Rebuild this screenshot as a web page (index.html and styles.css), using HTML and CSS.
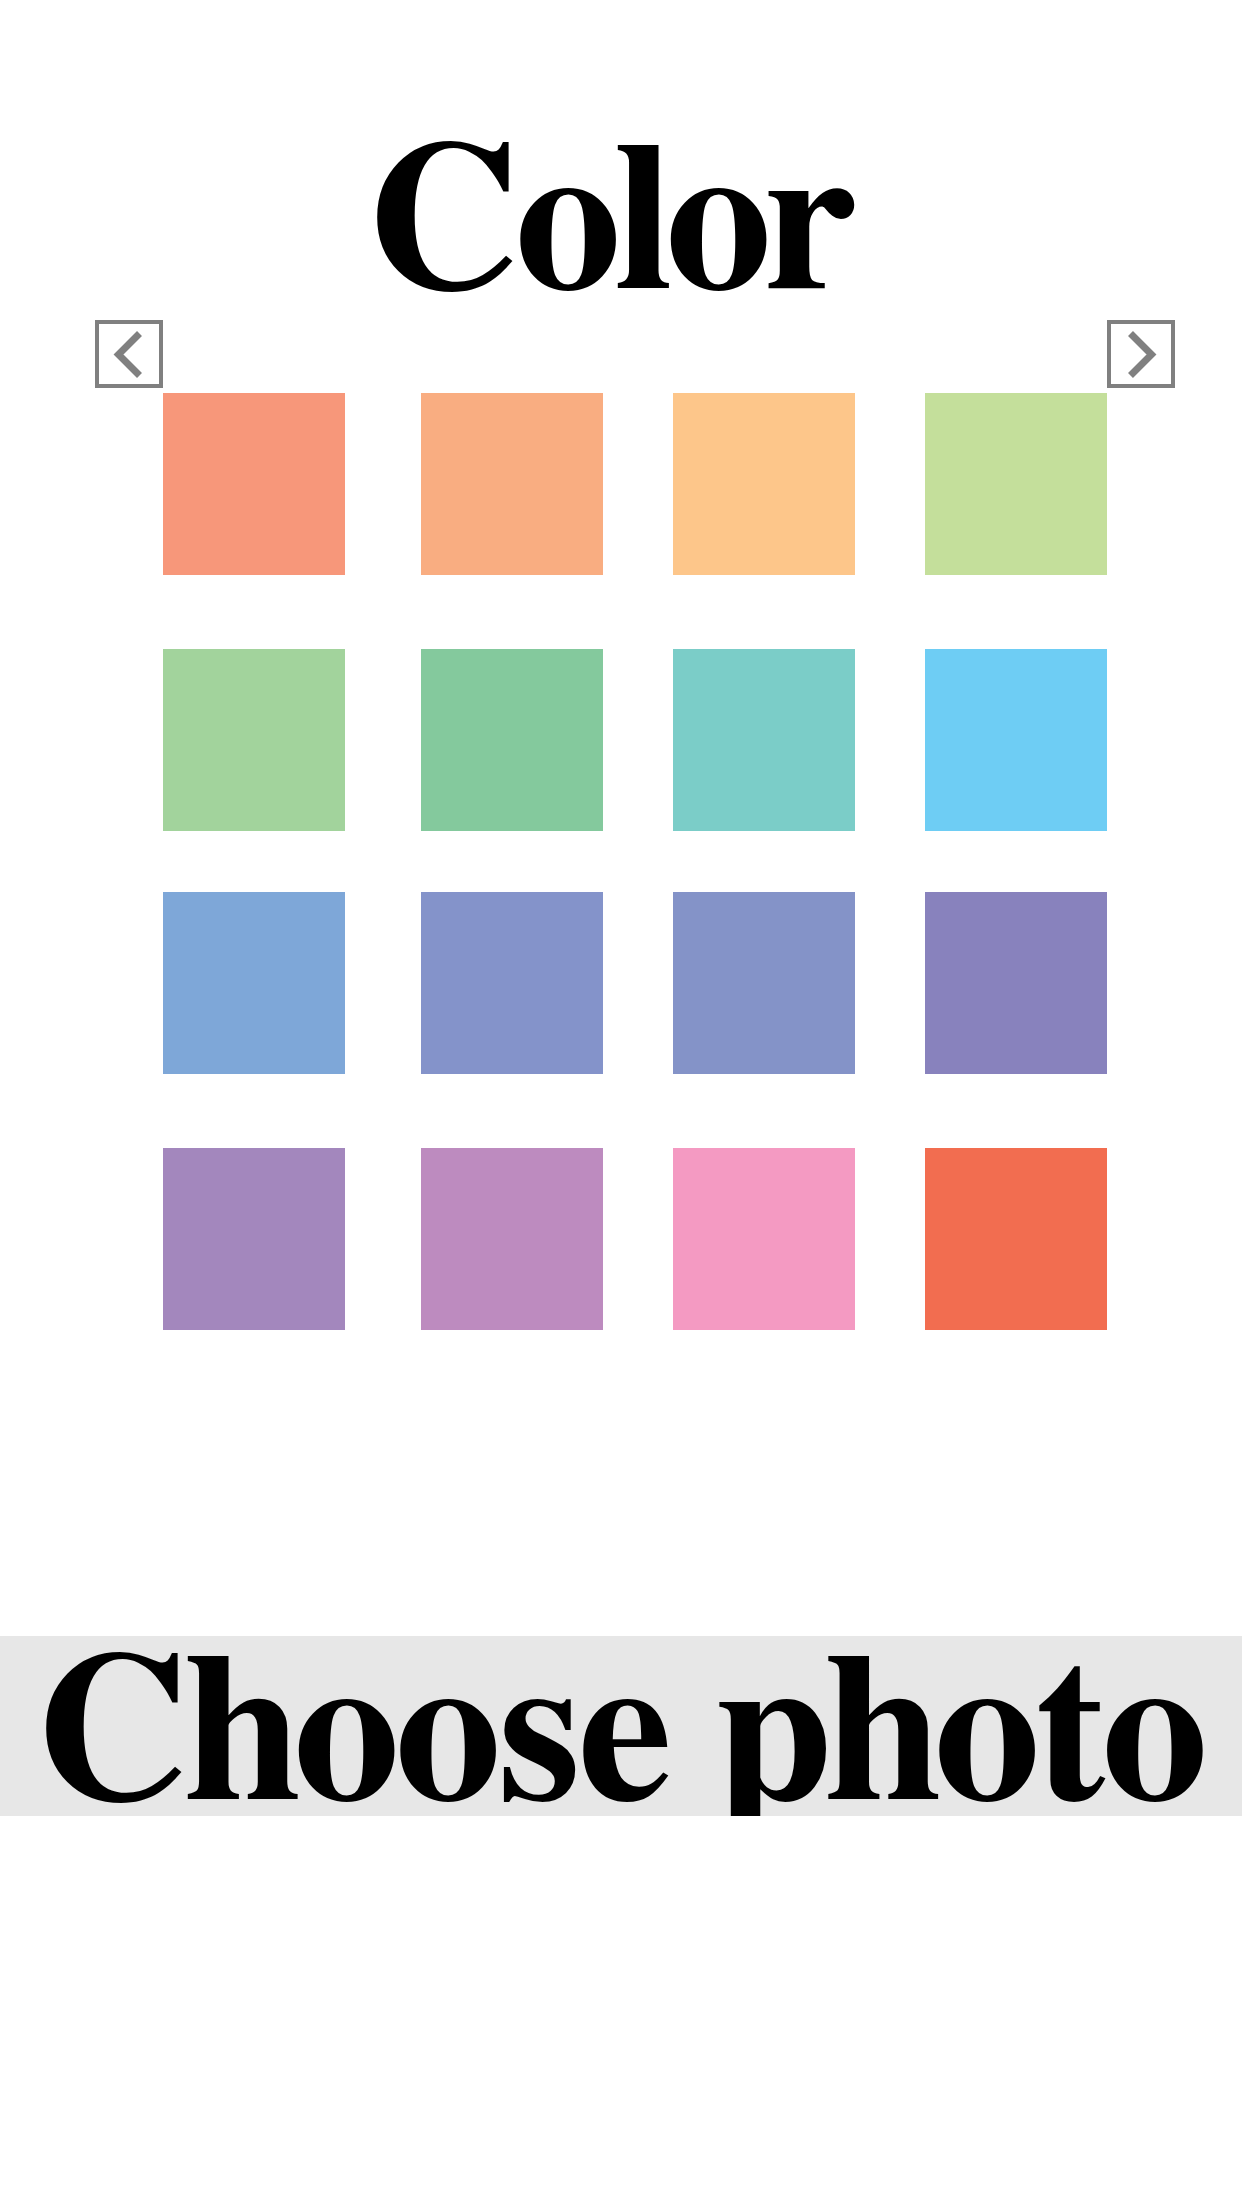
FILE: index.html
```html
<!DOCTYPE html>
<html lang="en">
<head>
  <meta charset="UTF-8" />
  <title>Color</title>
  <link rel="stylesheet" href="styles.css">
</head>
<body>

  <h1 class="title">Color</h1>

  <!-- Palette picker -->
  <div class="picker">
    <button class="nav" id="prevPage" aria-label="Previous">
      <svg viewBox="0 0 60 60" width="60" height="60"><polyline points="40.5,9.5 19.5,30.5 40.5,51.5" /></svg>
    </button>

    <div class="swatches" id="swatches">
      <div class="swatch" style="background:#f7977a"></div>
      <div class="swatch" style="background:#f9ad81"></div>
      <div class="swatch" style="background:#fdc68a"></div>
      <div class="swatch" style="background:#c4df9b"></div>

      <div class="swatch" style="background:#a2d39c"></div>
      <div class="swatch" style="background:#84c99d"></div>
      <div class="swatch" style="background:#7bcdc8"></div>
      <div class="swatch" style="background:#6ecdf4"></div>

      <div class="swatch" style="background:#7ea7d8"></div>
      <div class="swatch" style="background:#8493ca"></div>
      <div class="swatch" style="background:#8493c8"></div>
      <div class="swatch" style="background:#8882bd"></div>

      <div class="swatch" style="background:#a387bd"></div>
      <div class="swatch" style="background:#bd8bbf"></div>
      <div class="swatch" style="background:#f49ac2"></div>
      <div class="swatch" style="background:#f26d50"></div>
    </div>

    <button class="nav" id="nextPage" aria-label="Next">
      <svg viewBox="0 0 60 60" width="60" height="60"><polyline points="19.5,9.5 40.5,30.5 19.5,51.5" /></svg>
    </button>
  </div>

  <!-- Photo -->
  <div class="photo-btn" id="choosePhoto" role="button">Choose photo</div>

</body>
</html>
```

FILE: styles.css
```css
body {
  margin: 0;
  background: #fff;
  font-family: "FreeSerif", "Liberation Serif", "Times New Roman", serif;
  color: #000;
}

.title {
  margin: 0 0 1px;
  padding: 129px 22px 0 0;
  font-size: 212px;
  line-height: 190px;
  font-weight: bold;
  letter-spacing: -5px;
  text-align: center;
  white-space: nowrap;
}

.picker {
  display: flex;
  align-items: flex-start;
  padding-left: 95px;
}

.nav {
  width: 68px;
  height: 68px;
  padding: 0;
  border: 4px solid #808080;
  background: #fff;
  box-sizing: border-box;
  cursor: pointer;
}
.nav svg {
  display: block;
}
.nav polyline {
  fill: none;
  stroke: #808080;
  stroke-width: 7;
}

.swatches {
  display: grid;
  grid-template-columns: 258px 252px 252px 182px;
  grid-template-rows: 256px 243px 256px 182px;
  margin-top: 73px;
}
.swatch {
  width: 182px;
  height: 182px;
}

.photo-btn {
  box-sizing: border-box;
  height: 180px;
  margin-top: 306px;
  padding-top: 9px;
  background: #e7e7e7;
  font-size: 212px;
  line-height: 180px;
  font-weight: bold;
  letter-spacing: -4.7px;
  text-align: center;
  white-space: nowrap;
  cursor: pointer;
}
```
